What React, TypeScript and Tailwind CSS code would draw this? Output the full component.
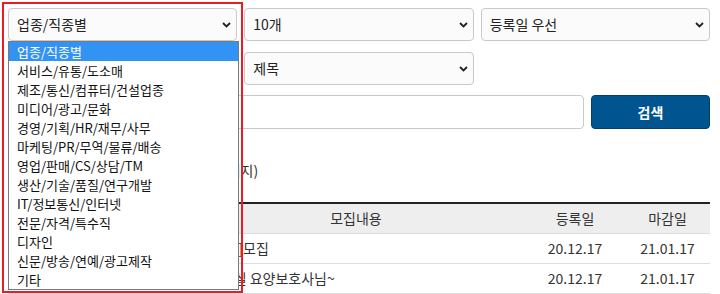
import React from "react";

const font = { fontFamily: '"Noto Sans CJK KR", "Noto Sans", sans-serif' };

function Chevron() {
  return (
    <svg width="9" height="6" viewBox="0 0 9 6" className="shrink-0">
      <polyline points="1,1 4.5,4.5 8,1" fill="none" stroke="#222" strokeWidth="1.8" />
    </svg>
  );
}

function FakeSelect({ label }: { label: string }) {
  return (
    <div className="flex h-[33px] items-center justify-between rounded-[4px] border border-[#c9c9c9] bg-[#fbfbfb] pl-[8px] pr-[5px] text-[14px] text-[#222]">
      <span>{label}</span>
      <Chevron />
    </div>
  );
}

const items = [
  "업종/직종별",
  "서비스/유통/도소매",
  "제조/통신/컴퓨터/건설업종",
  "미디어/광고/문화",
  "경영/기획/HR/재무/사무",
  "마케팅/PR/무역/물류/배송",
  "영업/판매/CS/상담/TM",
  "생산/기술/품질/연구개발",
  "IT/정보통신/인터넷",
  "전문/자격/특수직",
  "디자인",
  "신문/방송/연예/광고제작",
  "기타",
];

const rows = [
  { no: "2", cat: "서비스", title: "[요양사]모집", reg: "20.12.17", end: "21.01.17" },
  { no: "1", cat: "서비스", title: "근무하실 요양보호사님~", reg: "20.12.17", end: "21.01.17" },
];

export default function App() {
  return (
    <div className="relative h-[294px] w-[720px] overflow-hidden bg-white" style={font}>
      <div className="pl-[8px] pr-[10px] pt-[8px]">
        <div className="grid grid-cols-3 gap-[7px]">
          <FakeSelect label="업종/직종별" />
          <FakeSelect label="10개" />
          <FakeSelect label="등록일 우선" />
        </div>
        <div className="mt-[11px] grid grid-cols-3 gap-[7px]">
          <FakeSelect label="지역별" />
          <FakeSelect label="제목" />
          <div />
        </div>
        <div className="mt-[10px] flex gap-[7px]">
          <div className="h-[34px] flex-1 rounded-[4px] border border-[#c9c9c9] bg-white" />
          <div className="flex h-[34px] w-[119px] items-center justify-center rounded-[4px] border border-[#0a3d66] bg-[#005490] text-[14px] font-bold text-white">
            검색
          </div>
        </div>
        <div className="ml-[3px] mt-[31px] h-[20px] text-[14px] leading-[20px] text-[#333]">
          총 2건의 채용정보가 있습니다 (1/1 페이지)
        </div>
        <div className="mt-[22px] border-t-2 border-[#222]">
          <div className="flex h-[30px] items-center border-b border-[#dddddd] bg-[#eeeeee] text-[14px] text-[#333]">
            <div className="w-[60px] text-center">번호</div>
            <div className="w-[119px] text-center">업종</div>
            <div className="w-[338px] text-center">모집내용</div>
            <div className="w-[100px] text-center">등록일</div>
            <div className="flex-1 text-center">마감일</div>
          </div>
          {rows.map((r) => (
            <div key={r.no} className="flex h-[30px] items-center border-b border-[#dddddd] text-[14px] text-[#333]">
              <div className="w-[60px] text-center">{r.no}</div>
              <div className="w-[119px] text-center">{r.cat}</div>
              <div className="w-[338px] pl-[8px]">{r.title}</div>
              <div className="w-[100px] text-center">{r.reg}</div>
              <div className="flex-1 text-center">{r.end}</div>
            </div>
          ))}
        </div>
      </div>

      <div className="absolute left-[8px] top-[41px] w-[231px] border border-[#7a7a7a] bg-white">
        {items.map((it, i) => (
          <div
            key={it}
            className={
              i === 0
                ? "h-[19px] bg-[#3393f5] pl-[8px] text-[13px] leading-[19px] text-white"
                : "h-[19px] pl-[8px] text-[13px] leading-[19px] text-[#111]"
            }
          >
            {it}
          </div>
        ))}
      </div>

      <div className="pointer-events-none absolute left-[2px] top-[2px] h-[291px] w-[241px] border-2 border-[#ec1c24]" />
    </div>
  );
}
